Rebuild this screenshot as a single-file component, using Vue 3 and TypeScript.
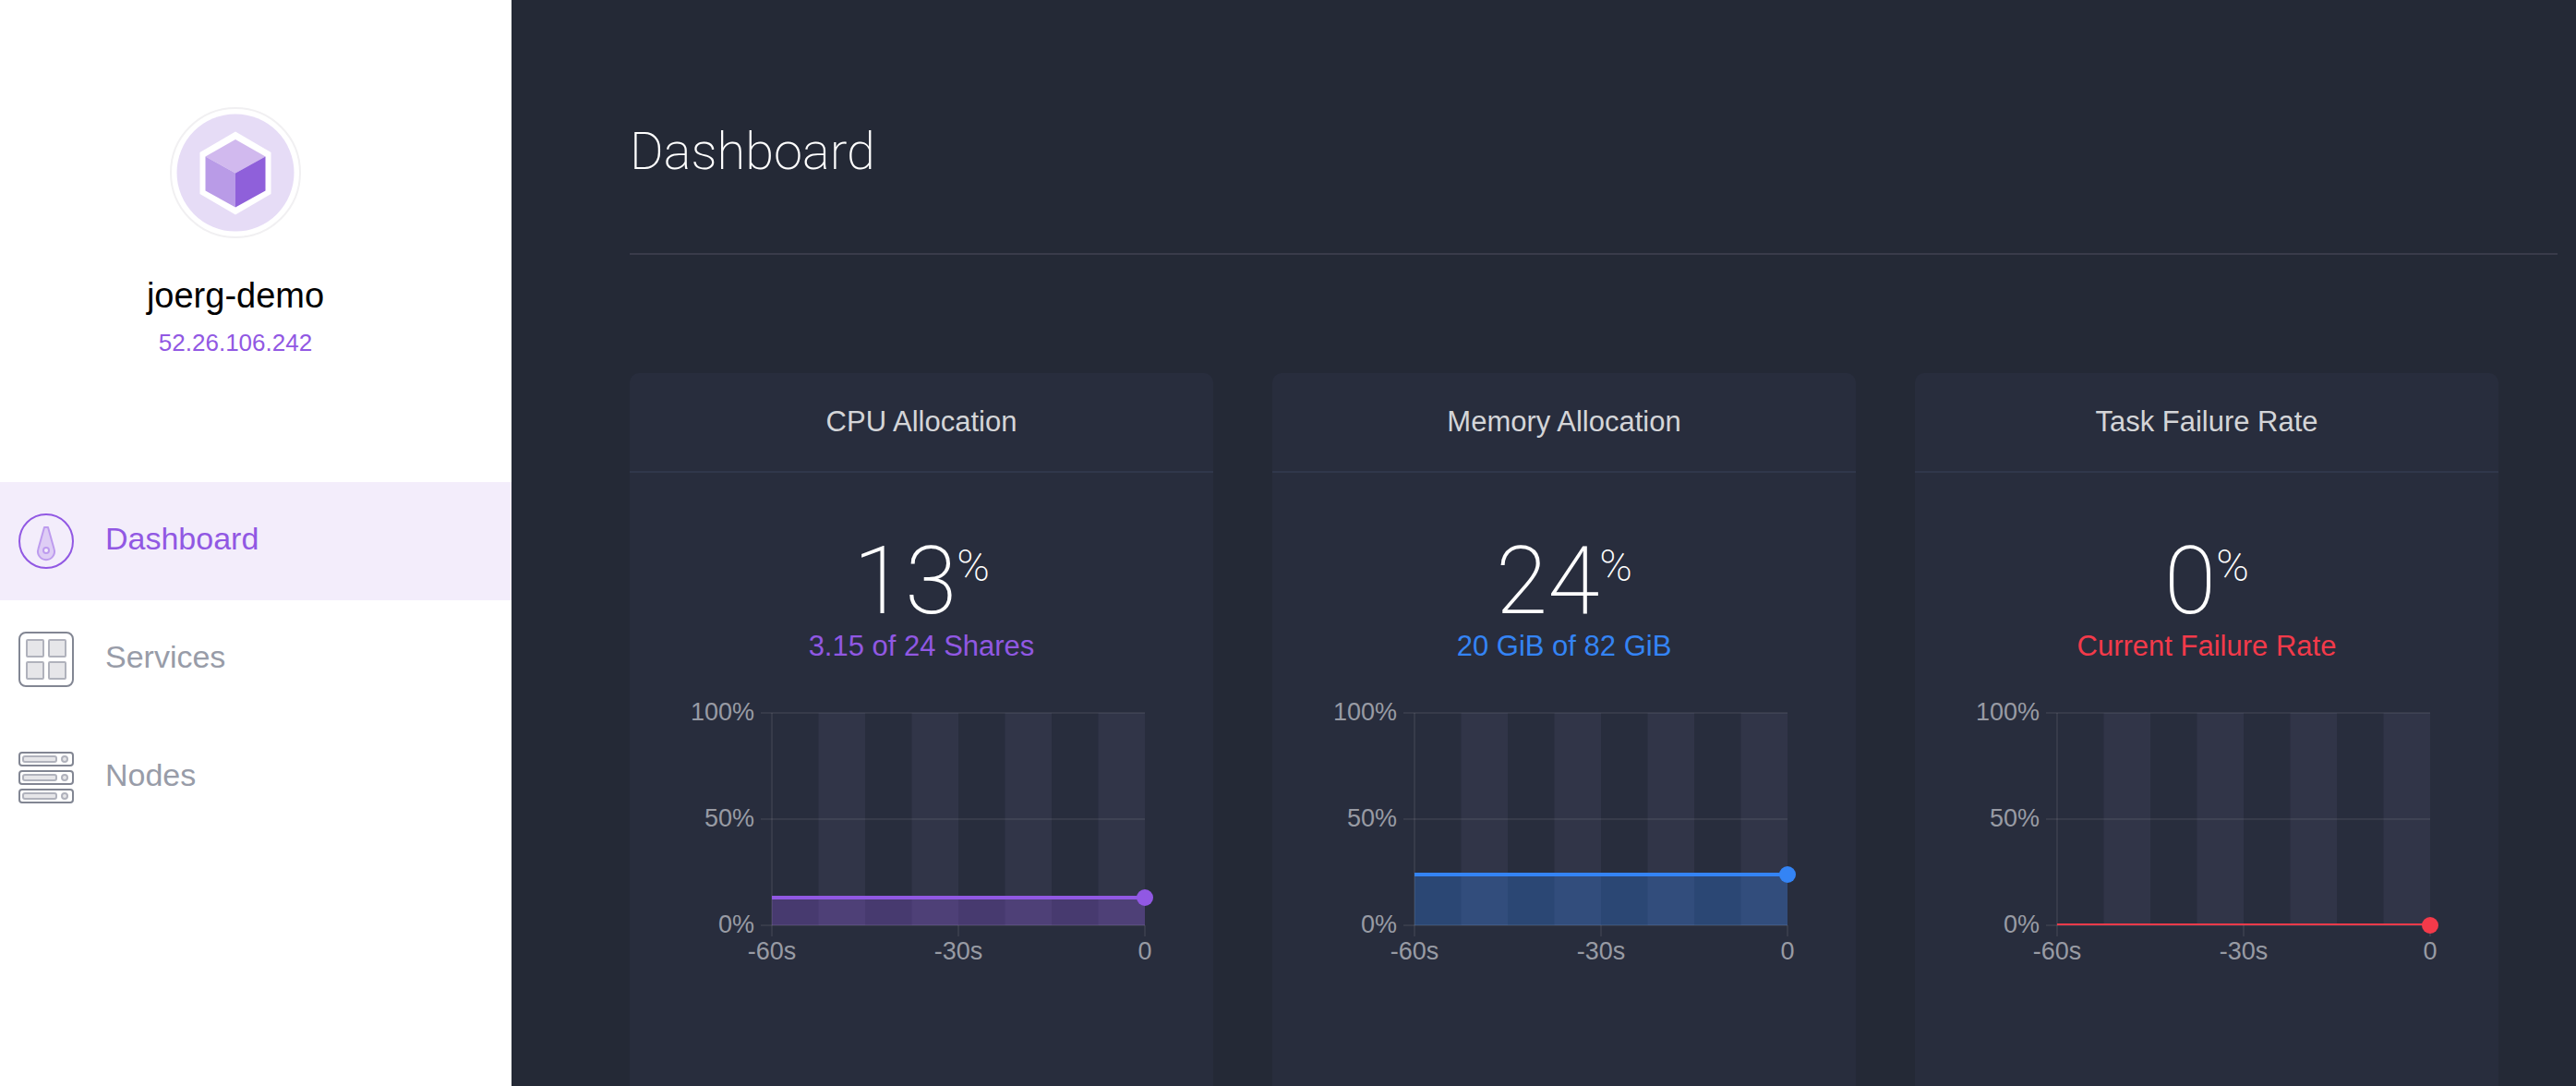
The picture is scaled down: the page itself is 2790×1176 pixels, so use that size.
<script setup lang="ts">
interface Metric {
  title: string
  value: number
  caption: string
  color: string
}

interface NavItem {
  label: string
  icon: 'gauge' | 'grid' | 'servers'
  active: boolean
}

const navItems: NavItem[] = [
  { label: 'Dashboard', icon: 'gauge', active: true },
  { label: 'Services', icon: 'grid', active: false },
  { label: 'Nodes', icon: 'servers', active: false },
]

const metrics: Metric[] = [
  { title: 'CPU Allocation', value: 13, caption: '3.15 of 24 Shares', color: '#9158e3' },
  { title: 'Memory Allocation', value: 24, caption: '20 GiB of 82 GiB', color: '#3484f5' },
  { title: 'Task Failure Rate', value: 0, caption: 'Current Failure Rate', color: '#f33a4a' },
]

// Plot area inside the chart's 632 x 290 view box
const plot = { left: 154, right: 558, top: 12, bottom: 242 }
const plotWidth = plot.right - plot.left
const plotHeight = plot.bottom - plot.top
const bandWidth = plotWidth / 8
const bands = [1, 3, 5, 7].map((i) => plot.left + i * bandWidth)

const yTicks = [100, 50, 0].map((v) => ({ label: `${v}%`, y: yFor(v) }))
const xTicks = [
  { label: '-60s', x: plot.left },
  { label: '-30s', x: plot.left + plotWidth / 2 },
  { label: '0', x: plot.right },
]

function yFor(value: number): number {
  return Math.round(plot.bottom - (value / 100) * plotHeight)
}
</script>

<template>
  <div class="app">
    <aside class="sidebar">
      <header class="cluster">
        <svg class="logo" viewBox="0 0 142 142" aria-hidden="true">
          <circle cx="71" cy="71" r="70" fill="#fff" stroke="#f1f0f2" stroke-width="2" />
          <circle cx="71" cy="71" r="63.5" fill="#e6dcf6" />
          <path d="M71 26.5 109.5 49v45L71 116.500 32.500 94V49z" fill="#fff" />
          <path d="M71 35 103.500 53.500 71 71.500 38.500 53.500z" fill="#d1b9ee" />
          <path d="M38.500 53.500 71 71.500V108.500L38.500 90.500z" fill="#b99be7" />
          <path d="M103.500 53.500 71 71.500V108.500L103.500 90.500z" fill="#8f60da" />
        </svg>
        <h2 class="cluster-name">joerg-demo</h2>
        <p class="cluster-ip">52.26.106.242</p>
      </header>

      <nav class="nav">
        <a
          v-for="item in navItems"
          :key="item.label"
          href="#"
          class="nav-item"
          :class="{ active: item.active }"
        >
          <svg v-if="item.icon === 'gauge'" class="nav-icon" viewBox="0 0 60 60" aria-hidden="true">
            <circle cx="30" cy="30" r="29" fill="none" stroke="#9158e3" stroke-width="2" />
            <path
              d="M28 15h4l6.600 23.500a9 9 0 1 1-17.200 0z"
              fill="#decdf5"
              stroke="#bd9bee"
              stroke-width="2"
              stroke-linejoin="round"
            />
            <circle cx="30" cy="40" r="3" fill="#f3edfb" stroke="#bd9bee" stroke-width="2" />
          </svg>
          <svg v-else-if="item.icon === 'grid'" class="nav-icon" viewBox="0 0 60 60" aria-hidden="true">
            <rect x="1" y="1" width="58" height="58" rx="7" fill="none" stroke="#828693" stroke-width="2" />
            <g fill="#e6e6e9" stroke="#b0b2bc" stroke-width="2">
              <rect x="9" y="9" width="18" height="18" rx="1" />
              <rect x="33" y="9" width="18" height="18" rx="1" />
              <rect x="9" y="33" width="18" height="18" rx="1" />
              <rect x="33" y="33" width="18" height="18" rx="1" />
            </g>
          </svg>
          <svg v-else class="nav-icon" viewBox="0 0 60 60" aria-hidden="true">
            <g v-for="y in [2, 22, 42]" :key="y" stroke-width="2">
              <rect x="1" :y="y + 1" width="58" height="14" rx="3" fill="none" stroke="#828693" />
              <rect x="5" :y="y + 5" width="36" height="6" rx="2" fill="#e6e6e9" stroke="#b0b2bc" />
              <circle cx="50" :cy="y + 8" r="3" fill="#e6e6e9" stroke="#b0b2bc" />
            </g>
          </svg>
          <span class="nav-label">{{ item.label }}</span>
        </a>
      </nav>
    </aside>

    <main class="main">
      <h1 class="page-title">Dashboard</h1>

      <div class="cards">
        <section v-for="m in metrics" :key="m.title" class="card">
          <h2 class="card-title">{{ m.title }}</h2>
          <div class="card-body">
            <p class="value">{{ m.value }}<span class="unit">%</span></p>
            <p class="caption" :style="{ color: m.color }">{{ m.caption }}</p>
            <svg class="chart" viewBox="0 0 632 290" role="img" :aria-label="m.title + ' over the last 60 seconds'">
              <rect
                v-for="x in bands"
                :key="x"
                :x="x"
                :y="plot.top"
                :width="bandWidth"
                :height="plotHeight"
                fill="#313548"
              />
              <rect
                :x="plot.left"
                :y="yFor(m.value)"
                :width="plotWidth"
                :height="plot.bottom - yFor(m.value)"
                :fill="m.color"
                fill-opacity="0.3"
              />
              <g class="grid">
                <line
                  v-for="t in yTicks"
                  :key="t.label"
                  :x1="plot.left - 12"
                  :x2="plot.right"
                  :y1="t.y"
                  :y2="t.y"
                />
                <line :x1="plot.left" :x2="plot.left" :y1="plot.top" :y2="plot.bottom" />
                <line
                  v-for="t in xTicks"
                  :key="t.label"
                  :x1="t.x"
                  :x2="t.x"
                  :y1="plot.bottom"
                  :y2="plot.bottom + 12"
                />
              </g>
              <rect
                :x="plot.left"
                :y="yFor(m.value) - 2"
                :width="plotWidth"
                :height="m.value > 0 ? 4 : 2"
                :fill="m.color"
              />
              <circle :cx="plot.right" :cy="yFor(m.value)" r="9" :fill="m.color" />
              <g class="axis-labels">
                <text v-for="t in yTicks" :key="t.label" x="135" :y="t.y + 8" text-anchor="end">{{ t.label }}</text>
                <text v-for="t in xTicks" :key="t.label" :x="t.x" :y="plot.bottom + 37" text-anchor="middle">{{ t.label }}</text>
              </g>
            </svg>
          </div>
        </section>
      </div>
    </main>
  </div>
</template>

<style>
body {
  margin: 0;
  background: #242936;
}
</style>

<style scoped>
.app {
  display: flex;
  height: 100vh;
  font-family: 'Liberation Sans', Arial, sans-serif;
}

h1,
h2,
p {
  margin: 0;
  font-weight: 400;
}

.sidebar {
  flex: none;
  width: 554px;
  background: #fff;
}

.cluster {
  display: flex;
  flex-direction: column;
  align-items: center;
  box-sizing: border-box;
  height: 522px;
  padding: 116px 44px 0 0;
}

.logo {
  width: 142px;
  height: 142px;
}

.cluster-name {
  margin-top: 38px;
  font-size: 38px;
  line-height: 48px;
  color: #000;
}

.cluster-ip {
  margin-top: 10px;
  font-size: 26px;
  line-height: 34px;
  color: #9158e3;
}

.nav-item {
  display: flex;
  align-items: center;
  gap: 34px;
  height: 128px;
  padding-left: 20px;
  color: #989ca8;
  font-size: 34px;
  line-height: 40px;
  text-decoration: none;
}

.nav-item.active {
  background: #f3edfb;
  color: #9158e3;
}

.nav-icon {
  width: 60px;
  height: 60px;
}

.nav-label {
  padding-bottom: 6px;
}

.main {
  flex: 1;
  min-width: 0;
  overflow-y: auto;
  scrollbar-width: none;
  padding: 122px 20px 0 128px;
  background: #242936;
}

.page-title {
  padding-bottom: 68px;
  border-bottom: 2px solid #393b4a;
  font-family: Roboto, sans-serif;
  font-weight: 200;
  font-size: 56px;
  line-height: 84px;
  color: #fff;
}

.cards {
  display: grid;
  grid-template-columns: repeat(3, 1fr);
  gap: 64px;
  margin: 128px 64px 0 0;
}

.card {
  border-radius: 10px;
  background: #282d3d;
  text-align: center;
}

.card-title {
  padding: 34px 0;
  border-bottom: 2px solid #30374b;
  font-size: 31px;
  line-height: 38px;
  color: #d4d5d8;
}

.card-body {
  padding: 65px 0 160px;
}

.value {
  display: flex;
  justify-content: center;
  font-family: Roboto, sans-serif;
  font-weight: 200;
  font-size: 102px;
  line-height: 104px;
  color: #fff;
}

.unit {
  font-size: 48px;
  line-height: 72px;
}

.caption {
  font-size: 31px;
  line-height: 38px;
}

.chart {
  display: block;
  width: 100%;
  margin-top: 41px;
  overflow: visible;
}

.grid line {
  stroke: #fff;
  stroke-opacity: 0.07;
  stroke-width: 2;
}

.axis-labels text {
  font-size: 27px;
  fill: #989ba4;
}
</style>
